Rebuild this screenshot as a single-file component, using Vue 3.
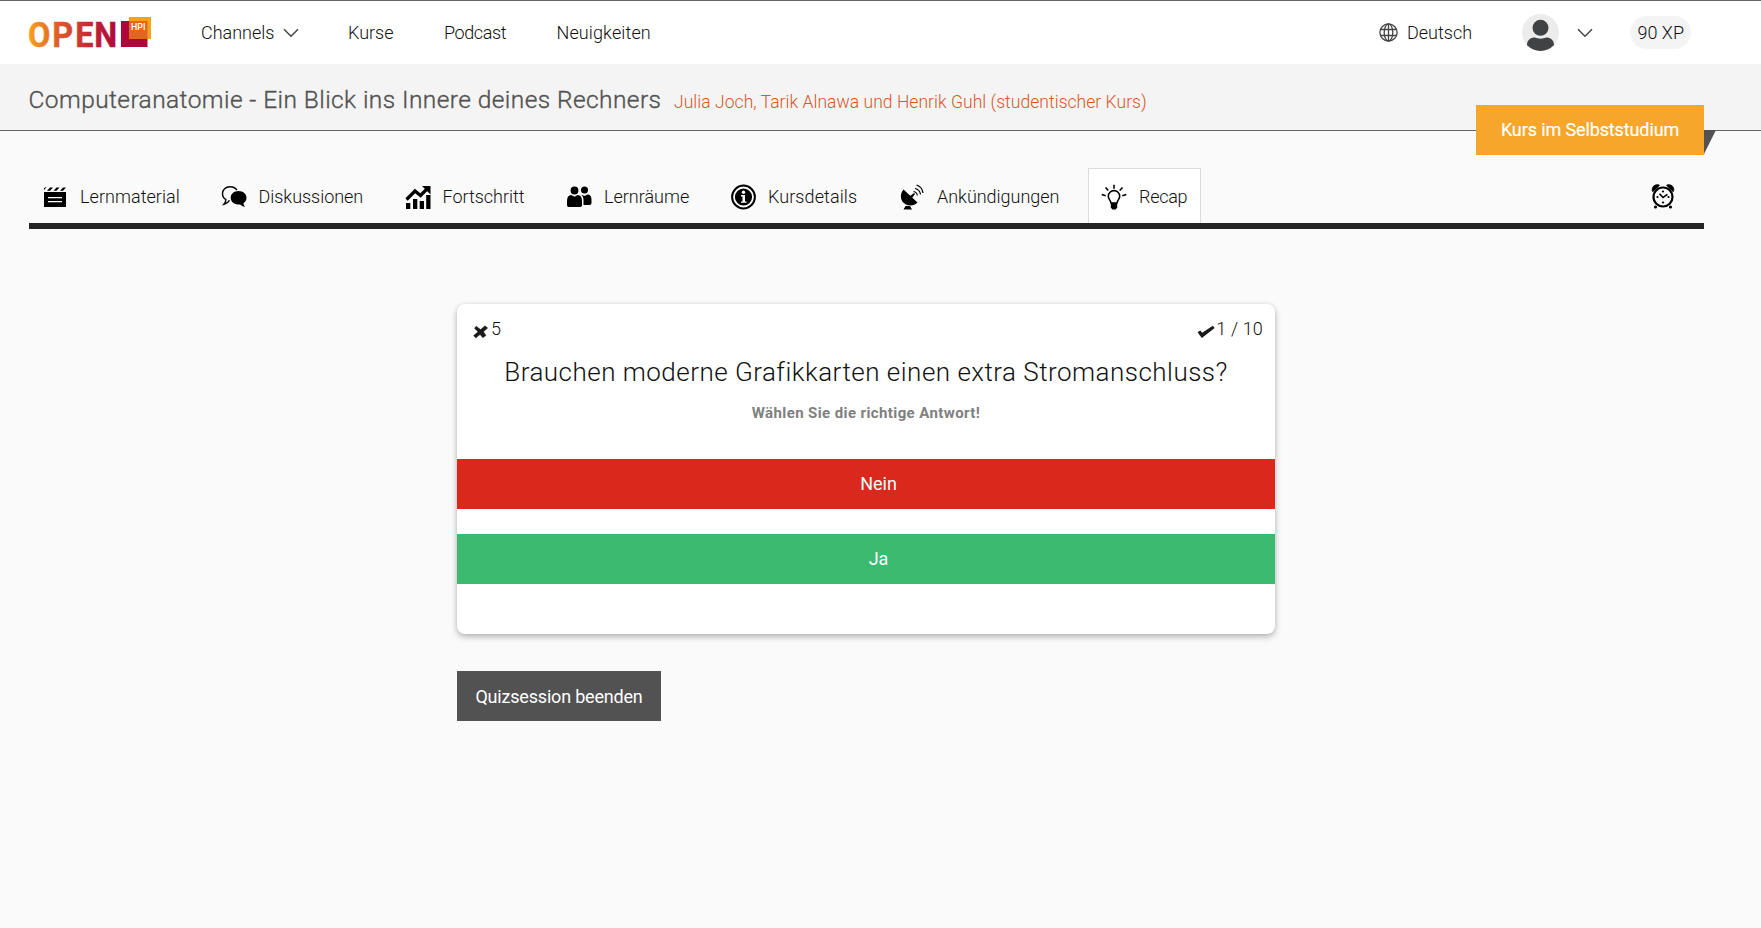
<script setup>
const tabs = [
  { icon: 'clapper', label: 'Lernmaterial', spacing: 0.05 },
  { icon: 'chat', label: 'Diskussionen', spacing: -0.04 },
  { icon: 'chart', label: 'Fortschritt', spacing: -0.02 },
  { icon: 'people', label: 'Lernräume', spacing: 0 },
  { icon: 'info', label: 'Kursdetails', spacing: 0.08 },
  { icon: 'dish', label: 'Ankündigungen', spacing: -0.03 },
  { icon: 'bulb', label: 'Recap', spacing: -0.29, active: true },
]
</script>

<template>
  <div class="page">
    <header class="topbar">
      <svg class="logo" width="128" height="54" viewBox="-4 -10 128 54">
        <defs>
          <linearGradient id="brand" gradientUnits="userSpaceOnUse" x1="1" y1="0" x2="98" y2="0">
            <stop offset="0" stop-color="#f9a01e" />
            <stop offset="0.35" stop-color="#db5a2c" />
            <stop offset="0.75" stop-color="#c02236" />
            <stop offset="1" stop-color="#b00a3a" />
          </linearGradient>
        </defs>
        <text x="0 27 52.500 73.600" y="31" transform="scale(.9 1)" fill="url(#brand)" stroke="url(#brand)" stroke-width="0.500" class="logo-text">OPEN</text>
        <rect x="93" y="5" width="26.500" height="26" fill="#b00539" />
        <rect x="101" y="1" width="22" height="22" fill="#f6a21b" />
        <rect x="101" y="5" width="18.500" height="18" fill="#e2671e" />
        <text x="103" y="13.500" textLength="14.500" lengthAdjust="spacingAndGlyphs" fill="#fff" class="logo-small">HPI</text>
      </svg>
      <nav class="nav">
        <a class="channels">Channels
          <svg width="16" height="10" viewBox="0 0 16 10"><path d="M1 1.200l7 7 7-7" fill="none" stroke="#444" stroke-width="1.500" /></svg>
        </a>
        <a class="kurse">Kurse</a>
        <a class="podcast">Podcast</a>
        <a class="news">Neuigkeiten</a>
      </nav>
      <div class="account">
        <svg class="globe" width="19" height="19" viewBox="0 0 19 19" fill="none" stroke="#444" stroke-width="1.300">
          <circle cx="9.500" cy="9.500" r="8.600" /><ellipse cx="9.500" cy="9.500" rx="4.300" ry="8.600" /><path d="M1.500 6.500h16M1.500 12.500h16M9.500 1v17" />
        </svg>
        <span class="language">Deutsch</span>
        <svg class="avatar" width="37" height="37" viewBox="0 0 37 37">
          <defs><clipPath id="face"><circle cx="18.500" cy="18.500" r="18.500" /></clipPath></defs>
          <circle cx="18.500" cy="18.500" r="18.500" fill="#ececec" />
          <g clip-path="url(#face)" fill="#414244">
            <circle cx="18.500" cy="13.800" r="8" />
            <path d="M5 31c0-5 3.500-7.500 8-7.500 3 1.500 8 1.500 11 0 4.500 0 8 2.500 8 7.500v6H5z" />
          </g>
        </svg>
        <svg class="caret" width="16" height="10" viewBox="0 0 16 10"><path d="M1 1.200l7 7 7-7" fill="none" stroke="#444" stroke-width="1.500" /></svg>
        <span class="xp">90 XP</span>
      </div>
    </header>

    <section class="course">
      <h1>Computeranatomie - Ein Blick ins Innere deines Rechners</h1>
      <span class="teachers">Julia Joch, Tarik Alnawa und Henrik Guhl (studentischer Kurs)</span>
      <div class="ribbon">Kurs im Selbststudium</div>
    </section>

    <div class="tabs">
      <a v-for="tab in tabs" :key="tab.label" class="tab" :class="{ active: tab.active }">
        <svg width="26" height="26" viewBox="0 0 26 26" fill="#000">
          <template v-if="tab.icon === 'clapper'">
            <path d="M2 8h22v15H2z" />
            <path d="M2 4l2.500-1L3 5 2 6zM5 6.800l3-3.300h3L8 6.800zM11.500 6.800l3-3.300h3l-3 3.300zM18 6.800l3-3.300h3l-3 3.300z" />
            <path d="M6 13.700h14M6 17.700h14" stroke="#fff" stroke-width="1.300" />
          </template>
          <template v-else-if="tab.icon === 'chat'">
            <path d="M16 6C14 3.500 11.500 2.800 9 2.800 4.500 2.800 1.500 5.500 1.500 9.500c0 3 1.300 4.800 3.400 6-.1 2-.7 3.300-2 4.800 3-.6 4.500-2 5.500-4" fill="none" stroke="#000" stroke-width="1.400" />
            <path d="M17.500 7c4.600 0 8 2.900 8 6.800 0 2.300-1.200 4.200-3.100 5.500.2 1.500.8 2.500 1.700 3.400-2.200-.2-3.800-1-4.900-2.200-5.200.6-9.500-2.300-9.500-6.700C9.700 9.900 13 7 17.500 7z" />
          </template>
          <template v-else-if="tab.icon === 'chart'">
            <path d="M1 19h4.300v6H1zM8 15h4.300v10H8zM14.700 17H19v8h-4.300zM21.200 11h4.300v14h-4.300z" />
            <path d="M1.500 15.500L10 7l5.500 4.500L22 5" fill="none" stroke="#000" stroke-width="3.200" />
            <path d="M17 2h8.500v8.500z" />
          </template>
          <template v-else-if="tab.icon === 'people'">
            <circle cx="8.500" cy="6.500" r="3.900" /><circle cx="18.500" cy="6" r="3.500" />
            <path d="M1 17c0-4 1.500-6 4.200-6l3.300 1.800 3.300-1.800c2.700 0 4.200 2 4.200 6v4.200c0 1-1 1.800-2 1.800H3c-1 0-2-.8-2-1.800z" />
            <path d="M15 10.500l3.500 1.500 3-1.500c2.800 0 4 2 4 5V19c0 1.300-.8 2-2 2h-6v-5c0-2.500-1-4.500-2.500-5.500z" />
          </template>
          <template v-else-if="tab.icon === 'info'">
            <circle cx="13.500" cy="13" r="11.400" fill="#fff" stroke="#000" stroke-width="2" /><circle cx="13.500" cy="13" r="8.600" />
            <circle cx="13.500" cy="8.300" r="1.700" fill="#fff" /><path d="M11 11h4v6.500h1.500v1.300H11v-1.300h1.500v-5H11z" fill="#fff" />
          </template>
          <template v-else-if="tab.icon === 'dish'">
            <path d="M4.500 5.500C0 11 1.500 18 7 20.500c4 1.800 8.800 1 11.500-2z" />
            <path d="M4.500 25.500l2-3.500h4.500l2 3.500zM11 12l4-3 1 1-3 4z" />
            <path d="M14.500 7.500a4.500 4.500 0 0 1 3.800 4M16 4.500a7 7 0 0 1 5.500 6M17.500 1a9.500 9.500 0 0 1 6.500 8" fill="none" stroke="#000" stroke-width="1.200" />
          </template>
          <template v-else>
            <path d="M10 19c0-2.500-2.700-3.500-2.700-6.700a5.700 5.700 0 0 1 11.400 0C18.700 15.500 16 16.500 16 19z" fill="none" stroke="#000" stroke-width="1.600" />
            <path d="M9.800 19h6.400v4.500l-1.500 2h-3.400l-1.500-2z" />
            <path d="M13 .8v4M4.500 3.500l2.800 3M21.500 3.500l-2.800 3M.7 10.500l4 1.200M25.300 10.500l-4 1.200" stroke="#000" stroke-width="1.600" />
          </template>
        </svg>
        <span :style="{ letterSpacing: tab.spacing + 'px' }">{{ tab.label }}</span>
      </a>
      <svg class="clock" width="26" height="26" viewBox="0 0 26 26">
        <circle cx="13" cy="14" r="9.500" fill="none" stroke="#000" stroke-width="2.200" />
        <path d="M2.500 8.500C1 5 4 1 8.500 1.700c1 .2 1.300.7.500 1.300L3.700 8c-.5.700-.9.900-1.200.5zM23.500 8.500C25 5 22 1 17.500 1.700c-1 .2-1.300.7-.5 1.300L22.300 8c.5.700.9.900 1.200.5z" stroke="#000" stroke-width="0.600" />
        <path d="M9.500 10.800l3.500 3.700 4.500-3.200" fill="none" stroke="#000" stroke-width="1.600" />
        <circle cx="13" cy="8.500" r="1.100" /><circle cx="13" cy="19.500" r="1.100" /><circle cx="7.500" cy="14" r="1.100" /><circle cx="18.500" cy="14" r="1.100" />
        <circle cx="5.500" cy="24" r="1.600" /><circle cx="20.500" cy="24" r="1.600" />
      </svg>
    </div>

    <main class="quiz">
      <div class="card">
        <div class="score">
          <span class="wrong">
            <svg width="16" height="14" viewBox="0 0 16 14"><path d="M3.200 1.200L7.600 4.600 12 .8l2.700 2.200-4.200 3.700 2.500 3.800-3.200 2.300-2.700-3.300-4.400 3.600L.6 10.600 5 6.800 1.400 3.300z" fill="#1a1a1a" stroke="#1a1a1a" stroke-width="0.400" /></svg>
            5
          </span>
          <span class="right">
            <svg width="18" height="14" viewBox="0 0 18 14"><path d="M.5 7.200l2.800-1.700 1.900 2.300L15.800.8 17.700 2.900 4.800 13z" fill="#1a1a1a" /></svg>
            1 / 10
          </span>
        </div>
        <h2>Brauchen moderne Grafikkarten einen extra Stromanschluss?</h2>
        <p>Wählen Sie die richtige Antwort!</p>
        <button class="answer no">Nein</button>
        <button class="answer yes">Ja</button>
      </div>
      <button class="finish">Quizsession beenden</button>
    </main>
  </div>
</template>

<style>
body { background: #fafafa; }
</style>

<style scoped>
.page { box-sizing: border-box; height: 928px; border-top: 1px solid #666; overflow: hidden; background: #fafafa; color: #111; font: 300 18px/24px Roboto, "Liberation Sans", sans-serif; }
svg { display: block; flex: none; }
button { display: block; border: 0; padding: 0; font: inherit; font-weight: 400; color: #fff; }

.topbar { display: flex; align-items: center; height: 63px; background: #fff; }
.logo { margin-left: 24px; }
.logo-text { font: 700 36px Roboto, sans-serif; }
.logo-small { font: 500 9px Roboto, sans-serif; }
.nav { display: flex; margin-left: 49px; }
.channels { display: flex; align-items: center; gap: 8px; width: 147px; }
.kurse { width: 96px; }
.podcast { width: 112.500px; letter-spacing: -0.4px; }
.news { letter-spacing: 0.12px; }
.account { display: flex; align-items: center; margin-left: auto; margin-right: 70px; }
.globe { margin-right: 9px; }
.language { width: 115px; }
.caret { margin: 0 37px 0 18px; }
.xp { box-sizing: border-box; width: 61px; height: 33px; padding-left: 7.500px; border-radius: 17px; background: #f4f4f4; line-height: 33px; }

.course { position: relative; box-sizing: border-box; display: flex; align-items: baseline; height: 67px; padding: 21px 0 0 28.500px; background: #f4f4f4; border-bottom: 1px solid #666; }
h1 { width: 645.500px; margin: 0; font-size: 24.500px; font-weight: 300; line-height: 30px; letter-spacing: 0.42px; color: #525252; -webkit-text-stroke: 0.35px #525252; white-space: nowrap; }
.teachers { font-size: 17.500px; letter-spacing: 0.045px; color: #dc5428; white-space: nowrap; }
.ribbon { position: absolute; top: 41px; right: 57px; width: 228px; height: 50px; background: #f5a62b; color: #fff; font-weight: 400; -webkit-text-stroke: 0.2px #fff; line-height: 50px; text-align: center; letter-spacing: -0.12px; }
.ribbon::after { content: ""; position: absolute; left: 228px; top: 25px; border-top: 24px solid #525252; border-right: 12px solid transparent; }

.tabs { display: grid; grid-template-columns: 178.500px 184px 161.500px 164px 169px 202px 113px 1fr; box-sizing: border-box; width: 1675px; height: 61px; margin: 37px 0 0 29px; border-bottom: 6px solid #252525; }
.tab { box-sizing: border-box; display: flex; align-items: center; gap: 12px; height: 55px; padding: 2px 0 0 13px; white-space: nowrap; }
.tab.active { padding: 1px 0 0 12px; background: #fff; border: 1px solid #dcdcdc; border-bottom: 0; }
.clock { justify-self: end; margin: 15px 28px 0 0; }

.quiz { width: 818px; margin: 75px 0 0 457px; }
.card { height: 330px; overflow: hidden; border-radius: 8px; background: #fff; box-shadow: 0 3px 6px rgba(0, 0, 0, 0.26), 0 0 4px rgba(0, 0, 0, 0.08); text-align: center; }
.score { display: flex; justify-content: space-between; height: 49px; padding: 13px 12px 0 15.500px; box-sizing: border-box; }
.wrong, .right { display: flex; gap: 2.500px; }
.right { gap: 1px; letter-spacing: 0.15px; }
.score svg { margin-top: 8px; }
h2 { margin: -1px 0 0; font-size: 26px; font-weight: 300; line-height: 40px; letter-spacing: 0.48px; white-space: nowrap; }
p { margin: 9px 0 34px; font-size: 15px; font-weight: 700; line-height: 24px; letter-spacing: 0.398px; color: #808080; }
.answer { width: 100%; height: 50px; margin-bottom: 25px; padding-left: 25px; }
.no { background: #da291c; }
.yes { background: #3cba70; }
.finish { width: 204px; height: 50px; margin-top: 37px; padding-top: 2px; background: #525252; letter-spacing: -0.19px; }
</style>
